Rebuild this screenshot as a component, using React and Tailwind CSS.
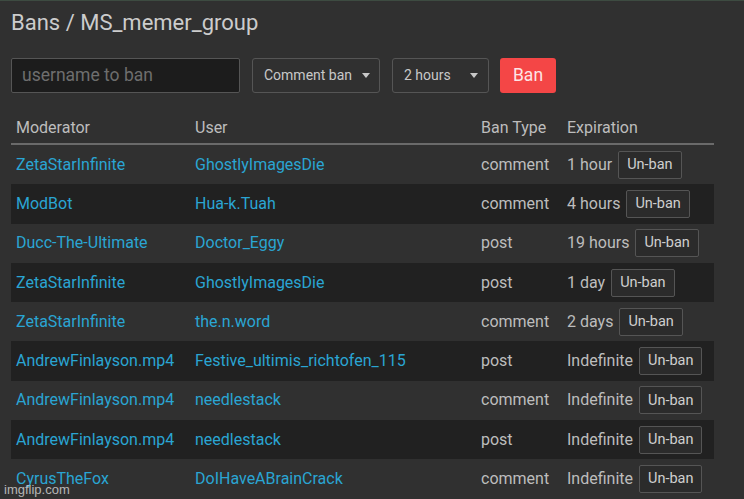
const bans = [
  ['ZetaStarInfinite', 'GhostlyImagesDie', 'comment', '1 hour'],
  ['ModBot', 'Hua-k.Tuah', 'comment', '4 hours'],
  ['Ducc-The-Ultimate', 'Doctor_Eggy', 'post', '19 hours'],
  ['ZetaStarInfinite', 'GhostlyImagesDie', 'post', '1 day'],
  ['ZetaStarInfinite', 'the.n.word', 'comment', '2 days'],
  ['AndrewFinlayson.mp4', 'Festive_ultimis_richtofen_115', 'post', 'Indefinite'],
  ['AndrewFinlayson.mp4', 'needlestack', 'comment', 'Indefinite'],
  ['AndrewFinlayson.mp4', 'needlestack', 'post', 'Indefinite'],
  ['CyrusTheFox', 'DoIHaveABrainCrack', 'comment', 'Indefinite'],
];

function Caret() {
  return <span className="ml-auto w-0 h-0 border-x-[4px] border-x-transparent border-t-[5px] border-t-[#c8c8c8]" />;
}

export default function App() {
  return (
    <div
      className="relative w-[744px] h-[499px] overflow-hidden bg-[#303030] border-t border-[#3d4b41] text-[#bdbdbd]"
      style={{ fontFamily: 'Roboto, "Liberation Sans", sans-serif' }}
    >
      <div className="px-[11px]">
        <h1 className="pt-[8px] text-[22px] leading-[28px] text-[#cccccc]">Bans / MS_memer_group</h1>

        <div className="mt-[21px] flex items-center h-[35px]">
          <div className="w-[229px] h-[35px] bg-[#1c1c1c] border border-[#555] rounded-[2px] flex items-center px-[10px] text-[17.5px] text-[#6e6e6e]">
            username to ban
          </div>
          <div className="ml-[12px] w-[128px] h-[35px] border border-[#555] rounded-[3px] flex items-center pl-[11px] pr-[9px] text-[14px] text-[#c8c8c8]">
            Comment ban
            <Caret />
          </div>
          <div className="ml-[12px] w-[97px] h-[35px] border border-[#555] rounded-[3px] flex items-center pl-[11px] pr-[10px] text-[14px] text-[#c8c8c8]">
            2 hours
            <Caret />
          </div>
          <button className="ml-[11px] w-[56px] h-[35px] bg-[#f44646] rounded-[3px] text-[17.5px] text-[#fde5e5]">
            Ban
          </button>
        </div>

        <div className="mt-[19px] w-[703px]">
          <div className="grid grid-cols-[179px_287px_85px_152px] h-[33px] items-center border-b-2 border-[#6a6a6a] text-[16px]">
            <div className="pl-[5px]">Moderator</div>
            <div className="pl-[5px]">User</div>
            <div className="pl-[4px]">Ban Type</div>
            <div className="pl-[5px]">Expiration</div>
          </div>
          {bans.map(([mod, user, type, exp], i) => (
            <div
              key={i}
              className={`grid grid-cols-[179px_287px_85px_152px] h-[39.3px] items-center text-[16px] ${i % 2 === 1 ? 'bg-[#212121]' : ''}`}
            >
              <div className="pl-[5px] text-[#2aa5d3] whitespace-nowrap">{mod}</div>
              <div className="pl-[5px] text-[#2aa5d3] whitespace-nowrap">{user}</div>
              <div className="pl-[4px]">{type}</div>
              <div className="pl-[5px] flex items-center whitespace-nowrap">
                {exp}
                <span className="ml-[6px] h-[28px] px-[8px] flex items-center border border-[#555] rounded-[2px] bg-[#2b2b2b] text-[14.5px] text-[#cfcfcf]">
                  Un-ban
                </span>
              </div>
            </div>
          ))}
        </div>
      </div>

      <div className="absolute left-[4px] bottom-[2px] text-[13px] leading-[14px] text-[#d8d8d8] opacity-80" style={{ fontFamily: '"Liberation Sans", sans-serif' }}>
        imgflip.com
      </div>
    </div>
  );
}
